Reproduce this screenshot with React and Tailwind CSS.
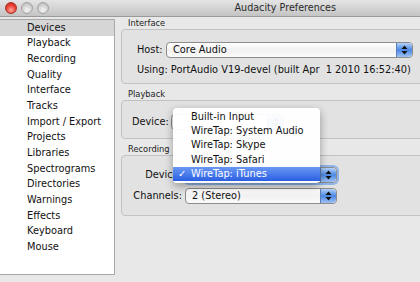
import React from 'react';

const font = { fontFamily: '"DejaVu Sans", "Liberation Sans", sans-serif' };

const pages = [
  'Devices', 'Playback', 'Recording', 'Quality', 'Interface', 'Tracks', 'Import / Export',
  'Projects', 'Libraries', 'Spectrograms', 'Directories', 'Warnings', 'Effects', 'Keyboard', 'Mouse',
];

const menuItems = ['Built-in Input', 'WireTap: System Audio', 'WireTap: Skype', 'WireTap: Safari', 'WireTap: iTunes'];

const Stepper = () => (
  <div className="w-[16px] h-full flex items-center justify-center rounded-r-[4px] bg-linear-to-b from-[#b4d0f7] via-[#4a87e3] to-[#9fc2f3] border-l border-[#5a7fb8]">
    <svg width="7" height="10" viewBox="0 0 7 10">
      <path d="M3.5 0.5 L6.5 4 L0.5 4 Z" fill="#111" />
      <path d="M3.5 9.5 L6.5 6 L0.5 6 Z" fill="#111" />
    </svg>
  </div>
);

const PopUp = ({ text, className = '', focused }) => (
  <div
    className={`h-[16px] flex items-stretch rounded-[4px] border border-[#8c8c8c] bg-linear-to-b from-white via-[#f1f1f1] to-[#fbfbfb] ${
      focused ? 'ring-2 ring-[#8fb4ea]' : ''
    } ${className}`}
  >
    <span className="flex-1 pl-[6px] leading-[14px] truncate">{text}</span>
    <Stepper />
  </div>
);

const GroupLabel = ({ children, first }) => (
  <div className={`${first ? 'h-[12px]' : 'h-[16px] pt-[4px]'} pl-[7px] text-[8.3px] leading-[12px] text-[#222]`}>
    {children}
  </div>
);

export default function App() {
  return (
    <div style={font} className="relative w-[420px] h-[282px] overflow-hidden bg-[#e8e8e8] text-[9.8px] text-[#111]">
      <div className="h-[17px] flex items-center bg-linear-to-b from-[#e4e4e4] to-[#c4c4c4] border-b border-[#9a9a9a]">
        <div className="flex gap-[4.5px] pl-[5px]">
          <span className="w-[11.5px] h-[11.5px] rounded-full border border-[#a8342b] bg-[radial-gradient(circle_at_50%_70%,#ffa89c,#ea3f32_55%,#c0231a)]" />
          <span className="w-[11.5px] h-[11.5px] rounded-full border border-[#a3a3a3] bg-[radial-gradient(circle_at_50%_70%,#f6f6f6,#cdcdcd_60%,#b2b2b2)]" />
          <span className="w-[11.5px] h-[11.5px] rounded-full border border-[#a3a3a3] bg-[radial-gradient(circle_at_50%_70%,#f6f6f6,#cdcdcd_60%,#b2b2b2)]" />
        </div>
        <span className="ml-[186px] text-[9.6px] text-[#2a2a2a]">Audacity Preferences</span>
      </div>

      <div className="flex">
        <ul className="mt-[2px] w-[115px] h-[256px] shrink-0 bg-white border-t border-r border-b border-[#a8a8a8]">
          {pages.map((p, i) => (
            <li
              key={p}
              className={`h-[15.7px] flex items-center pl-[27px] ${i === 0 ? 'bg-[#d6d6d6]' : ''}`}
            >
              {p}
            </li>
          ))}
        </ul>

        <div className="flex-1 pl-[6px] -mr-[10px]">
          <GroupLabel first>Interface</GroupLabel>
          <div className="h-[55px] rounded-[4px] border border-[#c2c2c2] bg-[#e2e2e2] pt-[12px] pl-[15px]">
            <div className="flex items-center">
              <span className="w-[29px]">Host:</span>
              <PopUp text="Core Audio" className="w-[247px]" />
            </div>
            <div className="mt-[6px] h-[12px] leading-[12px] whitespace-nowrap">
              Using: PortAudio V19-devel (built Apr&nbsp;&nbsp;1 2010 16:52:40)
            </div>
          </div>

          <GroupLabel>Playback</GroupLabel>
          <div className="h-[39px] rounded-[4px] border border-[#c2c2c2] bg-[#e2e2e2] pt-[13px] pl-[10px]">
            <div className="flex items-center">
              <span className="w-[39px]">Device:</span>
              <PopUp text="" className="w-[113px]" />
            </div>
          </div>

          <GroupLabel>Recording</GroupLabel>
          <div className="h-[61px] rounded-[4px] border border-[#c2c2c2] bg-[#e2e2e2] pt-[11px] pl-[10px]">
            <div className="grid grid-cols-[50px_152px] gap-x-[3px] gap-y-[5px] items-center">
              <span className="text-right">Device:</span>
              <PopUp text="" focused />
              <span className="text-right">Channels:</span>
              <PopUp text="2 (Stereo)" />
            </div>
          </div>
        </div>
      </div>

      <div className="absolute left-[173px] top-[108px] w-[147px] py-[2px] rounded-[4px] bg-white/95 shadow-[0_3px_8px_rgba(0,0,0,0.35)]">
        {menuItems.map((m, i) => {
          const sel = i === menuItems.length - 1;
          return (
            <div
              key={m}
              className={`relative h-[14.3px] flex items-center pl-[18px] ${
                sel ? 'bg-linear-to-b from-[#6a97f3] to-[#2a5ee2] text-white' : ''
              }`}
            >
              {sel && <span className="absolute left-[5px]">✓</span>}
              {m}
            </div>
          );
        })}
      </div>
    </div>
  );
}
